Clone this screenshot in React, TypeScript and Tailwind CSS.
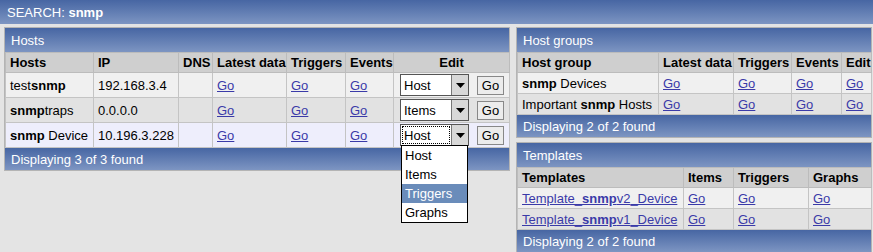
import React from 'react';

const grad = 'bg-gradient-to-b from-[#4766a3] to-[#7d95c2]';
const link = 'text-[#3a3aa8] underline';

function Sel({ value, focus }: { value: string; focus?: boolean }) {
  return (
    <div className="relative flex h-[22px] w-[69px] border border-[#555] bg-white">
      <div className={`flex flex-1 items-center pl-[3px] ${focus ? 'outline-1 outline-dotted outline-black -outline-offset-2' : ''}`}>
        {value}
      </div>
      <div className="flex w-[17px] items-center justify-center border-l border-[#777] bg-[#d8d8d8]">
        <svg width="9" height="5" viewBox="0 0 9 5">
          <path d="M0 0 H9 L4.5 5 Z" fill="#000" />
        </svg>
      </div>
      {focus && (
        <div className="absolute left-0 top-full z-10 w-[67px] border border-black bg-white">
          {['Host', 'Items', 'Triggers', 'Graphs'].map((o) => (
            <div key={o} className={`flex h-[19px] items-center pl-[3px] ${o === 'Triggers' ? 'bg-[#6a8cba] text-white' : ''}`}>
              {o}
            </div>
          ))}
        </div>
      )}
    </div>
  );
}

function GoBtn() {
  return (
    <div className="flex h-[19px] w-[27px] items-center justify-center border border-[#888] bg-[#ececec] leading-none">
      Go
    </div>
  );
}

function Panel({ title, footer, children }: { title: string; footer: string; children: React.ReactNode }) {
  return (
    <div className="border border-[#b4b4b4]">
      <div className={`flex h-[24px] items-center pl-[6px] text-white ${grad}`}>{title}</div>
      {children}
      <div className={`flex h-[22px] items-center pl-[6px] text-white ${grad}`}>{footer}</div>
    </div>
  );
}

const thBase = 'border border-[#bcbcbc] bg-[#cfcfcf] px-[4px] font-bold whitespace-nowrap';
const th = `${thBase} text-left`;
const td = 'border border-[#c4c4c4] px-[4px] whitespace-nowrap';

export default function App() {
  const hosts = [
    { pre: 'test', b: 'snmp', post: '', ip: '192.168.3.4', sel: 'Host', bg: 'bg-[#f0f0f0]' },
    { pre: '', b: 'snmp', post: 'traps', ip: '0.0.0.0', sel: 'Items', bg: 'bg-[#e2e2e2]' },
    { pre: '', b: 'snmp', post: ' Device', ip: '10.196.3.228', sel: 'Host', bg: 'bg-[#eeeefc]', focus: true },
  ];

  return (
    <div className="h-[252px] w-[873px] overflow-hidden bg-[#e4e4e4] text-[13px] leading-none text-black" style={{ fontFamily: '"Liberation Sans", Arial, sans-serif' }}>
      <div className={`flex h-[24px] items-center pl-[7px] text-white ${grad}`}>
        SEARCH:&nbsp;<b>snmp</b>
      </div>

      <div className="flex items-start gap-[6px] pl-[4px] pt-[3px]">
        {/* Hosts */}
        <div className="relative z-10 w-[506px]">
          <Panel title="Hosts" footer="Displaying 3 of 3 found">
            <table className="w-[504px] table-fixed border-collapse">
              <colgroup>
                <col className="w-[88px]" />
                <col className="w-[85px]" />
                <col className="w-[34px]" />
                <col className="w-[74px]" />
                <col className="w-[59px]" />
                <col className="w-[48px]" />
                <col className="w-[116px]" />
              </colgroup>
              <thead>
                <tr className="h-[20px]">
                  <th className={th}>Hosts</th>
                  <th className={th}>IP</th>
                  <th className={th}>DNS</th>
                  <th className={th}>Latest data</th>
                  <th className={th}>Triggers</th>
                  <th className={th}>Events</th>
                  <th className={`${thBase} text-center`}>Edit</th>
                </tr>
              </thead>
              <tbody>
                {hosts.map((h, i) => (
                  <tr key={i} className={`h-[25px] ${h.bg}`}>
                    <td className={td}>
                      {h.pre}
                      <b>{h.b}</b>
                      {h.post}
                    </td>
                    <td className={td}>{h.ip}</td>
                    <td className={td}></td>
                    <td className={td}><span className={link}>Go</span></td>
                    <td className={td}><span className={link}>Go</span></td>
                    <td className={td}><span className={link}>Go</span></td>
                    <td className={`${td} pl-[6px]`}>
                      <div className="flex items-center gap-[8px]">
                        <Sel value={h.sel} focus={h.focus} />
                        <GoBtn />
                      </div>
                    </td>
                  </tr>
                ))}
              </tbody>
            </table>
          </Panel>
        </div>

        {/* Right column */}
        <div className="flex w-[356px] flex-col gap-[4px]">
          <Panel title="Host groups" footer="Displaying 2 of 2 found">
            <table className="w-[354px] table-fixed border-collapse">
              <colgroup>
                <col className="w-[141px]" />
                <col className="w-[75px]" />
                <col className="w-[58px]" />
                <col className="w-[50px]" />
                <col className="w-[30px]" />
              </colgroup>
              <thead>
                <tr className="h-[20px]">
                  <th className={th}>Host group</th>
                  <th className={th}>Latest data</th>
                  <th className={th}>Triggers</th>
                  <th className={th}>Events</th>
                  <th className={th}>Edit</th>
                </tr>
              </thead>
              <tbody>
                <tr className="h-[21px] bg-[#f0f0f0]">
                  <td className={td}><b>snmp</b> Devices</td>
                  <td className={td}><span className={link}>Go</span></td>
                  <td className={td}><span className={link}>Go</span></td>
                  <td className={td}><span className={link}>Go</span></td>
                  <td className={td}><span className={link}>Go</span></td>
                </tr>
                <tr className="h-[21px] bg-[#e2e2e2]">
                  <td className={td}>Important <b>snmp</b> Hosts</td>
                  <td className={td}><span className={link}>Go</span></td>
                  <td className={td}><span className={link}>Go</span></td>
                  <td className={td}><span className={link}>Go</span></td>
                  <td className={td}><span className={link}>Go</span></td>
                </tr>
              </tbody>
            </table>
          </Panel>

          <Panel title="Templates" footer="Displaying 2 of 2 found">
            <table className="w-[354px] table-fixed border-collapse">
              <colgroup>
                <col className="w-[166px]" />
                <col className="w-[50px]" />
                <col className="w-[75px]" />
                <col className="w-[63px]" />
              </colgroup>
              <thead>
                <tr className="h-[20px]">
                  <th className={th}>Templates</th>
                  <th className={th}>Items</th>
                  <th className={th}>Triggers</th>
                  <th className={th}>Graphs</th>
                </tr>
              </thead>
              <tbody>
                {['v2', 'v1'].map((v, i) => (
                  <tr key={v} className={`h-[21px] ${i === 0 ? 'bg-[#f0f0f0]' : 'bg-[#e2e2e2]'}`}>
                    <td className={td}>
                      <span className={link}>Template_<b>snmp</b>{v}_Device</span>
                    </td>
                    <td className={td}><span className={link}>Go</span></td>
                    <td className={td}><span className={link}>Go</span></td>
                    <td className={td}><span className={link}>Go</span></td>
                  </tr>
                ))}
              </tbody>
            </table>
          </Panel>
        </div>
      </div>
    </div>
  );
}
